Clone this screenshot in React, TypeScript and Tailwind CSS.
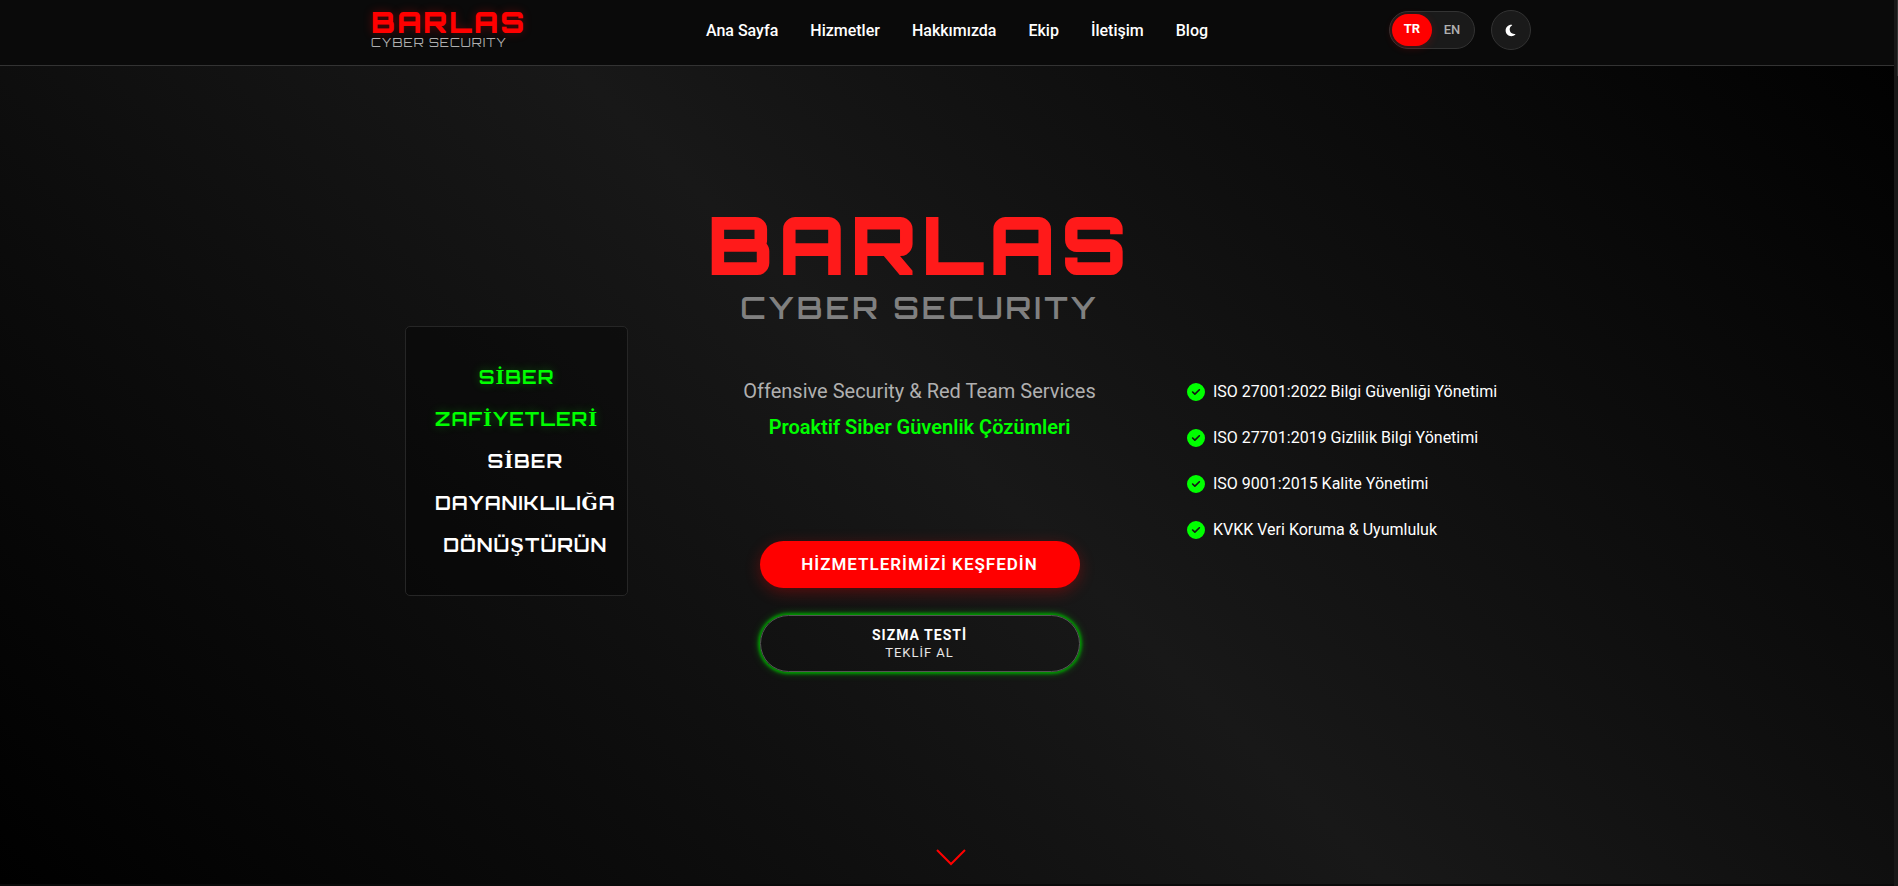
import { FaCircleCheck, FaMoon } from "react-icons/fa6";

const navLinks = ["Ana Sayfa", "Hizmetler", "Hakkımızda", "Ekip", "İletişim", "Blog"];

const certificates = [
  "ISO 27001:2022 Bilgi Güvenliği Yönetimi",
  "ISO 27701:2019 Gizlilik Bilgi Yönetimi",
  "ISO 9001:2015 Kalite Yönetimi",
  "KVKK Veri Koruma & Uyumluluk",
];

function Header() {
  return (
    <header className="relative border-b border-[#333] bg-[#0a0a0a]">
      <div className="mx-auto flex h-[65px] max-w-[1164px] items-start justify-between">
        <a href="#" className="mt-2 block w-[158px] whitespace-nowrap pl-1 font-['Orbitron','DejaVu_Sans',sans-serif]">
          <span className="block text-[29px] font-black leading-[28px] tracking-[2px] text-[#f00] [text-shadow:0_0_10px_rgba(255,0,0,0.3)]">
            BARLAS
          </span>
          <span className="block text-[12px] font-normal leading-[14px] tracking-[1px] text-[#b0b0b0]">
            CYBER SECURITY
          </span>
        </a>
        <nav className="mt-[19px] flex gap-8 text-[16px] font-medium leading-6 text-white">
          {navLinks.map((label) => (
            <a key={label} href="#">
              {label}
            </a>
          ))}
        </nav>
        <div className="mt-[10px] flex items-center gap-4">
          <div className="flex h-[38px] w-[86px] items-start rounded-full border border-[#333] bg-[#1a1a1a] p-[2px] text-[13px]">
            <button className="h-8 w-10 rounded-full bg-[#f00] pb-[2px] font-bold text-white shadow-[0_2px_8px_rgba(255,0,0,0.2)]">
              TR
            </button>
            <button className="h-8 w-10 font-medium text-[#b0b0b0]">EN</button>
          </div>
          <button
            aria-label="Tema"
            className="flex size-10 items-center justify-center rounded-full border border-[#333] bg-[#1a1a1a] text-white"
          >
            <FaMoon size={13} />
          </button>
        </div>
      </div>
    </header>
  );
}

// İ, Ğ and Ş are set in the serif face, the rest in Orbitron
function Word({ text }: { text: string }) {
  return (
    <span className="h-[42px]">
      {text.split(/([İĞŞ])/).map((part, i) =>
        i % 2 ? (
          <span key={i} className="font-['DejaVu_Serif',serif] leading-none">
            {part}
          </span>
        ) : (
          part
        )
      )}
    </span>
  );
}

function Slogan() {
  return (
    <div className="rounded-[5px] border border-[#262626] bg-black/30 p-[29px] font-['Orbitron','DejaVu_Serif',serif] text-[19px] font-bold leading-[42px] tracking-[1px]">
      <div className="flex flex-col items-center text-[#0f0] [text-shadow:0_0_10px_rgba(0,255,0,0.3)]">
        <Word text="SİBER" />
        <Word text="ZAFİYETLERİ" />
      </div>
      <div className="flex w-max flex-col items-center text-white">
        <Word text="SİBER" />
        <Word text="DAYANIKLILIĞA" />
        <Word text="DÖNÜŞTÜRÜN" />
      </div>
    </div>
  );
}

function HeroCenter() {
  return (
    <div className="flex flex-col items-center pl-6 text-center">
      <h1 className="whitespace-nowrap font-['Orbitron','DejaVu_Sans',sans-serif]">
        <span className="block text-[80px] font-black leading-[80px] tracking-[5px] text-[#ff1a1a]">BARLAS</span>
        <span className="mt-[2px] block text-[31px] font-semibold leading-[44px] tracking-[3px] text-[#808080]">
          CYBER SECURITY
        </span>
      </h1>
      <p className="mt-[43px] text-[20px] leading-9 text-[#b0b0b0]">Offensive Security &amp; Red Team Services</p>
      <p className="text-[20px] font-semibold leading-9 text-[#0f0]">Proaktif Siber Güvenlik Çözümleri</p>
      <div className="mt-24 flex w-80 flex-col gap-[27px]">
        <button className="h-[47px] rounded-full bg-[#f00] text-[17px] font-semibold tracking-[1px] text-white shadow-[0_4px_15px_rgba(255,0,0,0.3)]">
          HİZMETLERİMİZİ KEŞFEDİN
        </button>
        <button className="flex h-[57px] flex-col items-center justify-center rounded-full border border-[#555] text-white shadow-[0_0_3px_2px_rgba(0,160,0,0.9),0_0_10px_rgba(0,255,0,0.4)]">
          <span className="text-[14px] font-bold leading-[18px] tracking-[1px]">SIZMA TESTİ</span>
          <span className="text-[13px] leading-[18px] tracking-[1px] text-white/90">TEKLİF AL</span>
        </button>
      </div>
    </div>
  );
}

export default function App() {
  return (
    <div className="relative flex min-h-screen flex-col bg-[#0a0a0a] pb-[2px] font-['Roboto',sans-serif]">
      <div className="flex grow flex-col bg-[linear-gradient(45deg,#000_0%,#181818_50%,#000_100%)]">
        <Header />
        <main className="mx-auto grid w-full max-w-[1100px] grow grid-cols-[223px_1fr_312px] items-start pl-1.5 pt-[138px]">
          <div className="mt-[122px]">
            <Slogan />
          </div>
          <HeroCenter />
          <ul className="mt-[176px] text-[16px] text-white">
            {certificates.map((name) => (
              <li key={name} className="mb-[22px] flex items-center gap-2 whitespace-nowrap leading-6">
                <FaCircleCheck size={18} className="text-[#0f0]" />
                {name}
              </li>
            ))}
          </ul>
        </main>
        <a href="#" aria-label="Aşağı" className="mx-auto mb-[18px] block pl-1">
          <svg width="30" height="18" viewBox="0 0 30 18" fill="none" stroke="#f00" strokeWidth="2">
            <path d="M1 2 15 16 29 2" />
          </svg>
        </a>
      </div>
      <div className="absolute inset-y-0 right-0 w-1 bg-[#181818]">
        <div className="ml-auto h-[76px] w-px bg-[#333]" />
      </div>
    </div>
  );
}
